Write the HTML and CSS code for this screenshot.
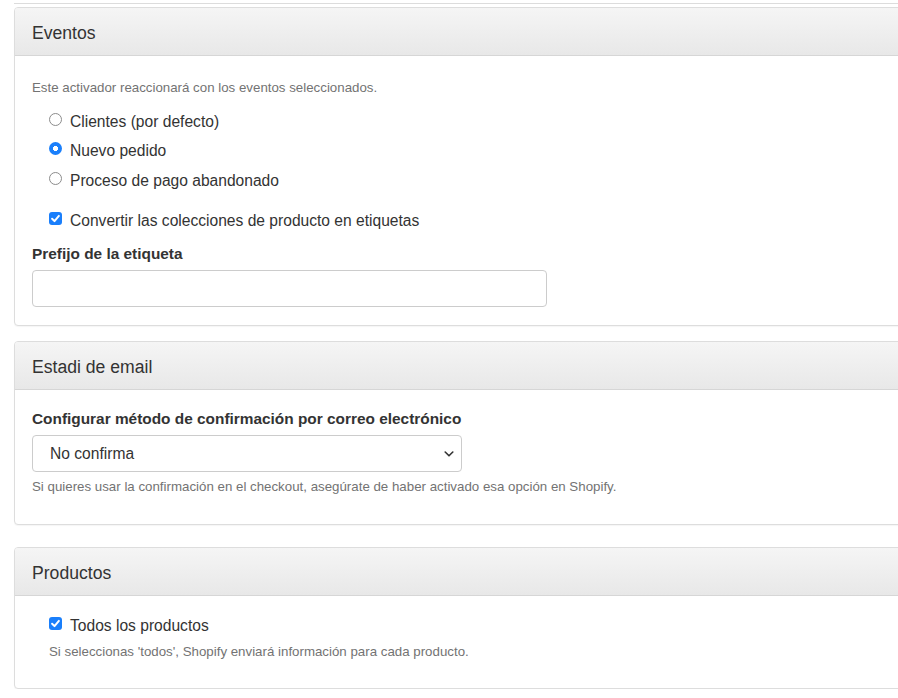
FILE: index.html
```html
<!DOCTYPE html>
<html lang="es">
<head>
<meta charset="utf-8">
<title>Configuración</title>
<link rel="stylesheet" href="styles.css">
</head>
<body>
<div class="page">
  <div class="prev-edge"></div>

  <section class="panel panel-events">
    <div class="panel-heading">Eventos</div>
    <div class="panel-body">
      <p class="intro">Este activador reaccionará con los eventos seleccionados.</p>
      <div class="choices">
        <label class="choice"><span class="radio"></span><span>Clientes (por defecto)</span></label>
        <label class="choice"><span class="radio checked"></span><span>Nuevo pedido</span></label>
        <label class="choice"><span class="radio"></span><span>Proceso de pago abandonado</span></label>
      </div>
      <label class="choice choice-check">
        <span class="checkbox checked"><svg viewBox="0 0 13 13" width="13" height="13"><path d="M3.1 6.8 L5.5 9.1 L9.9 3.9" fill="none" stroke="#fff" stroke-width="2" stroke-linecap="round" stroke-linejoin="round"/></svg></span>
        <span>Convertir las colecciones de producto en etiquetas</span>
      </label>
      <div class="field-label">Prefijo de la etiqueta</div>
      <div class="text-input"></div>
    </div>
  </section>

  <section class="panel panel-email">
    <div class="panel-heading">Estadi de email</div>
    <div class="panel-body">
      <div class="field-label">Configurar método de confirmación por correo electrónico</div>
      <div class="select">
        <span>No confirma</span>
        <svg class="chev" viewBox="0 0 10 6" width="10" height="6"><path d="M1.2 1 L5 4.8 L8.8 1" fill="none" stroke="#333" stroke-width="1.6" stroke-linecap="round" stroke-linejoin="round"/></svg>
      </div>
      <p class="help">Si quieres usar la confirmación en el checkout, asegúrate de haber activado esa opción en Shopify.</p>
    </div>
  </section>

  <section class="panel panel-products">
    <div class="panel-heading">Productos</div>
    <div class="panel-body">
      <label class="choice">
        <span class="checkbox checked"><svg viewBox="0 0 13 13" width="13" height="13"><path d="M3.1 6.8 L5.5 9.1 L9.9 3.9" fill="none" stroke="#fff" stroke-width="2" stroke-linecap="round" stroke-linejoin="round"/></svg></span>
        <span>Todos los productos</span>
      </label>
      <p class="help help-indent">Si seleccionas 'todos', Shopify enviará información para cada producto.</p>
    </div>
  </section>
</div>
</body>
</html>
```

FILE: styles.css
```css
html, body {
  margin: 0;
  padding: 0;
  overflow: hidden;
  background: #fff;
}

body {
  font-family: "Liberation Sans", Arial, Helvetica, sans-serif;
  color: #333;
  font-size: 15.6px;
}

.page {
  padding-left: 14px;
  margin-right: -40px;
}

.prev-edge {
  height: 3px;
  border-bottom: 1px solid #dcdcdc;
  margin-bottom: 3px;
}

.panel {
  border: 1px solid #dddddd;
  border-radius: 4px;
  background: #fff;
  box-shadow: 0 1px 1px rgba(0, 0, 0, 0.04);
}

.panel-events { margin-bottom: 15px; }
.panel-email { margin-bottom: 22px; }

.panel-heading {
  padding: 13px 17px 9px;
  line-height: 25px;
  font-size: 17.6px;
  color: #333;
  background: linear-gradient(to bottom, #f5f5f5 0%, #e8e8e8 100%);
  border-bottom: 1px solid #d6d6d6;
  border-radius: 3px 3px 0 0;
}

.panel-body {
  padding: 0 17px;
}

.panel-events .panel-body { padding-top: 23px; padding-bottom: 18px; }
.panel-email .panel-body { padding-top: 19px; padding-bottom: 28px; }
.panel-products .panel-body { padding-top: 15px; padding-bottom: 27px; }

.intro, .help {
  margin: 0;
  font-size: 13.3px;
  line-height: 18px;
  color: #737373;
}

.choices {
  margin-top: 10px;
}

.choice {
  display: flex;
  align-items: center;
  gap: 8px;
  height: 29.5px;
  padding-left: 17px;
  font-size: 15.6px;
  color: #333;
}

.choice-check {
  margin-top: 11px;
}

.radio {
  box-sizing: border-box;
  width: 13px;
  height: 13px;
  border-radius: 50%;
  border: 1px solid #8c8c8c;
  background: #fff;
  margin-bottom: 5px;
  flex: none;
}

.radio.checked {
  border: none;
  background: radial-gradient(circle, #fff 0 2.3px, #1a7ffb 2.8px);
}

.checkbox {
  box-sizing: border-box;
  width: 13px;
  height: 13px;
  border-radius: 3px;
  background: #1a7ffb;
  margin-bottom: 5px;
  flex: none;
  display: flex;
}

.field-label {
  font-weight: bold;
  font-size: 15.4px;
  line-height: 20px;
  margin-bottom: 6px;
}

.panel-events .field-label { margin-top: 8px; }

.text-input {
  box-sizing: border-box;
  width: 515px;
  height: 37px;
  border: 1px solid #cccccc;
  border-radius: 4px;
  background: #fff;
}

.select {
  box-sizing: border-box;
  width: 430px;
  height: 37px;
  border: 1px solid #cccccc;
  border-radius: 4px;
  background: #fff;
  display: flex;
  align-items: center;
  justify-content: space-between;
  padding: 0 7px 0 17px;
  color: #333;
}

.panel-email .help { margin-top: 6px; }

.help-indent {
  padding-left: 17px;
  margin-top: 2px;
}
```
